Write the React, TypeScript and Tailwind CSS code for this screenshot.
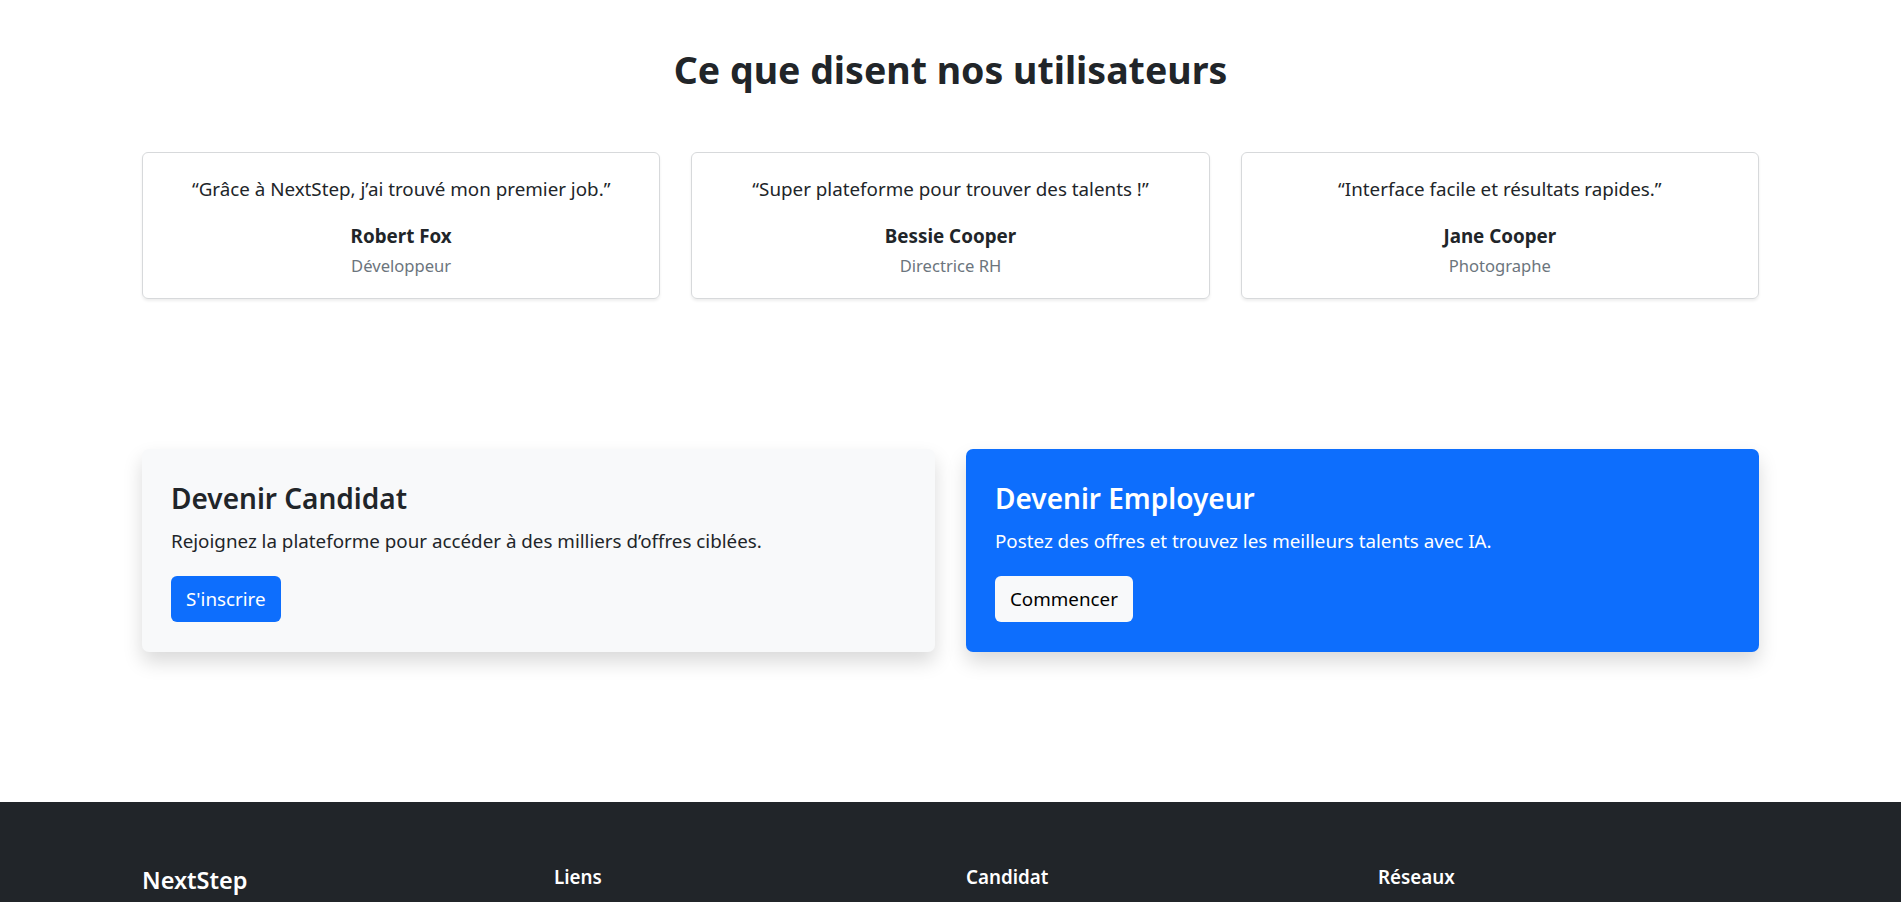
import React from 'react';

const testimonials = [
  { quote: '“Grâce à NextStep, j’ai trouvé mon premier job.”', name: 'Robert Fox', role: 'Développeur' },
  { quote: '“Super plateforme pour trouver des talents !”', name: 'Bessie Cooper', role: 'Directrice RH' },
  { quote: '“Interface facile et résultats rapides.”', name: 'Jane Cooper', role: 'Photographe' },
];

const footerCols = ['Liens', 'Candidat', 'Réseaux'];

export default function App() {
  return (
    <div className="min-h-screen bg-white text-[#212529] text-[18.8px] leading-[29px] font-['Noto_Sans',sans-serif]">
      {/* Testimonials */}
      <section className="pt-[47px]">
        <div className="max-w-[1617px] mx-auto">
          <h2 className="text-center text-[37.5px] leading-[46.6px] font-bold mb-[58px]">
            Ce que disent nos utilisateurs
          </h2>
          <div className="grid grid-cols-3 gap-[31px]">
            {testimonials.map((t) => (
              <div
                key={t.name}
                className="border border-[#d7d9db] rounded-[6px] shadow-[0_2px_3px_rgba(0,0,0,0.07)] text-center pt-[22px] pb-[18px] px-5"
              >
                <p className="mb-[18px]">{t.quote}</p>
                <div className="font-bold">{t.name}</div>
                <div className="text-[16.6px] leading-[29px] text-[#6c757d]">{t.role}</div>
              </div>
            ))}
          </div>
        </div>
      </section>

      {/* Call to action */}
      <section className="pt-[150px] pb-[150px]">
        <div className="max-w-[1617px] mx-auto grid grid-cols-2 gap-[31px]">
          <div className="bg-[#f8f9fa] rounded-[7px] shadow-[0_10px_19px_rgba(0,0,0,0.15)] px-[29px] pt-[33px] h-[203px]">
            <h3 className="text-[28px] leading-[33.6px] font-semibold mb-[12px]">Devenir Candidat</h3>
            <p className="mb-[20px]">Rejoignez la plateforme pour accéder à des milliers d’offres ciblées.</p>
            <button className="h-[46px] px-[15px] rounded-[6px] bg-[#0d6efd] text-white">S'inscrire</button>
          </div>
          <div className="bg-[#0d6efd] text-white rounded-[7px] shadow-[0_10px_19px_rgba(0,0,0,0.15)] px-[29px] pt-[33px] h-[203px]">
            <h3 className="text-[28px] leading-[33.6px] font-semibold mb-[12px]">Devenir Employeur</h3>
            <p className="mb-[20px]">Postez des offres et trouvez les meilleurs talents avec IA.</p>
            <button className="h-[46px] px-[15px] rounded-[6px] bg-[#f8f9fa] text-black">Commencer</button>
          </div>
        </div>
      </section>

      {/* Footer */}
      <footer className="bg-[#212529] text-white pt-[64px] pb-[58px]">
        <div className="max-w-[1617px] mx-auto grid grid-cols-4 gap-[31px]">
          <div>
            <h5 className="text-[23.5px] leading-[1.2] font-semibold">NextStep</h5>
          </div>
          {footerCols.map((c) => (
            <div key={c}>
              <h6 className="text-[18.8px] leading-[23px] font-semibold">{c}</h6>
            </div>
          ))}
        </div>
      </footer>
    </div>
  );
}
